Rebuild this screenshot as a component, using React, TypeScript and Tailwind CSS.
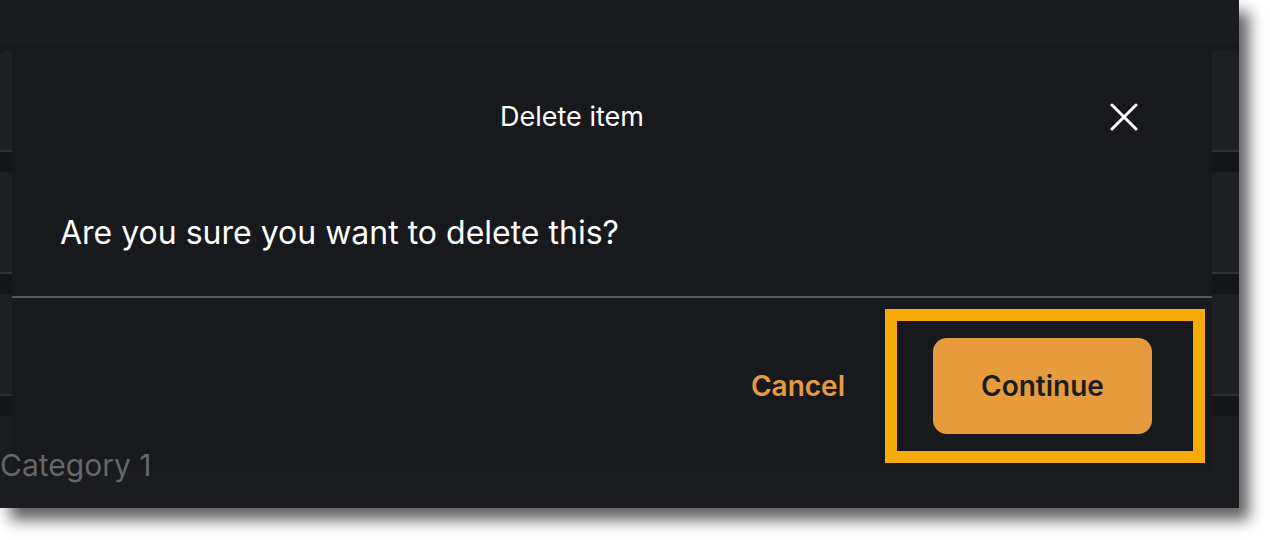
const ROWS = [0, 1, 2];

const CloseIcon = () => (
  <svg width="28" height="28" viewBox="0 0 28 28" fill="none" aria-hidden="true">
    <path
      d="M2 2L26 26M26 2L2 26"
      stroke="#ffffff"
      strokeWidth="3"
      strokeLinecap="round"
    />
  </svg>
);

const DeleteDialog = () => (
  <div className="absolute left-[12px] top-[43px] flex h-[429px] w-[1200px] flex-col bg-[#17191d]">
    <div className="flex h-[148px] items-center px-12">
      <h2 className="flex-1 text-center text-[27px] font-normal text-white">
        Delete item
      </h2>
      <button className="flex h-[60px] w-[80px] items-center justify-center">
        <CloseIcon />
      </button>
    </div>

    <p className="px-12 pt-[26px] text-[32px] leading-[32px] text-white">
      Are you sure you want to delete this?
    </p>

    <div className="mt-[47px] h-[2px] bg-[#56585c]" />

    <div className="relative flex flex-1 items-center justify-end gap-[88px] pr-[60px]">
      <button className="pt-[2px] text-[28px] font-semibold text-[#e69c3c]">
        Cancel
      </button>
      <button className="mt-[2px] h-[96px] w-[219px] rounded-[14px] bg-[#e69c3c] text-[28px] font-semibold text-[#1b1c1f]">
        Continue
      </button>
      {/* focus highlight around the primary action */}
      <div className="pointer-events-none absolute left-[873px] top-[11px] h-[154px] w-[320px] border-[12px] border-[#f8ab07]" />
    </div>
  </div>
);

export default function App() {
  return (
    <div
      className="h-[540px] w-[1270px] bg-white"
      style={{ fontFamily: "Inter, 'Noto Sans', sans-serif" }}
    >
      <div className="relative h-[508px] w-[1239px] overflow-hidden bg-[#17191d] shadow-[10px_12px_14px_rgba(0,0,0,0.62)]">
        <div className="h-[43px] bg-[#1a1b1f]" />
        <div className="mt-[7px] flex flex-col">
          {ROWS.map((row) => (
            <div key={row}>
              <div
                className={`h-[100px] bg-[#1e1f22] ${row === 0 ? "rounded-t-[8px]" : ""}`}
              />
              <div className="h-[2px] bg-[#2e3034]" />
              <div className="h-[20px] bg-[#141518]" />
            </div>
          ))}
          <div className="h-[92px] bg-[#1b1c1f] pt-[31px]">
            <span className="relative z-10 text-[30px] leading-[36px] text-[#65676a]">
              Category 1
            </span>
          </div>
        </div>

        <DeleteDialog />
      </div>
    </div>
  );
}
